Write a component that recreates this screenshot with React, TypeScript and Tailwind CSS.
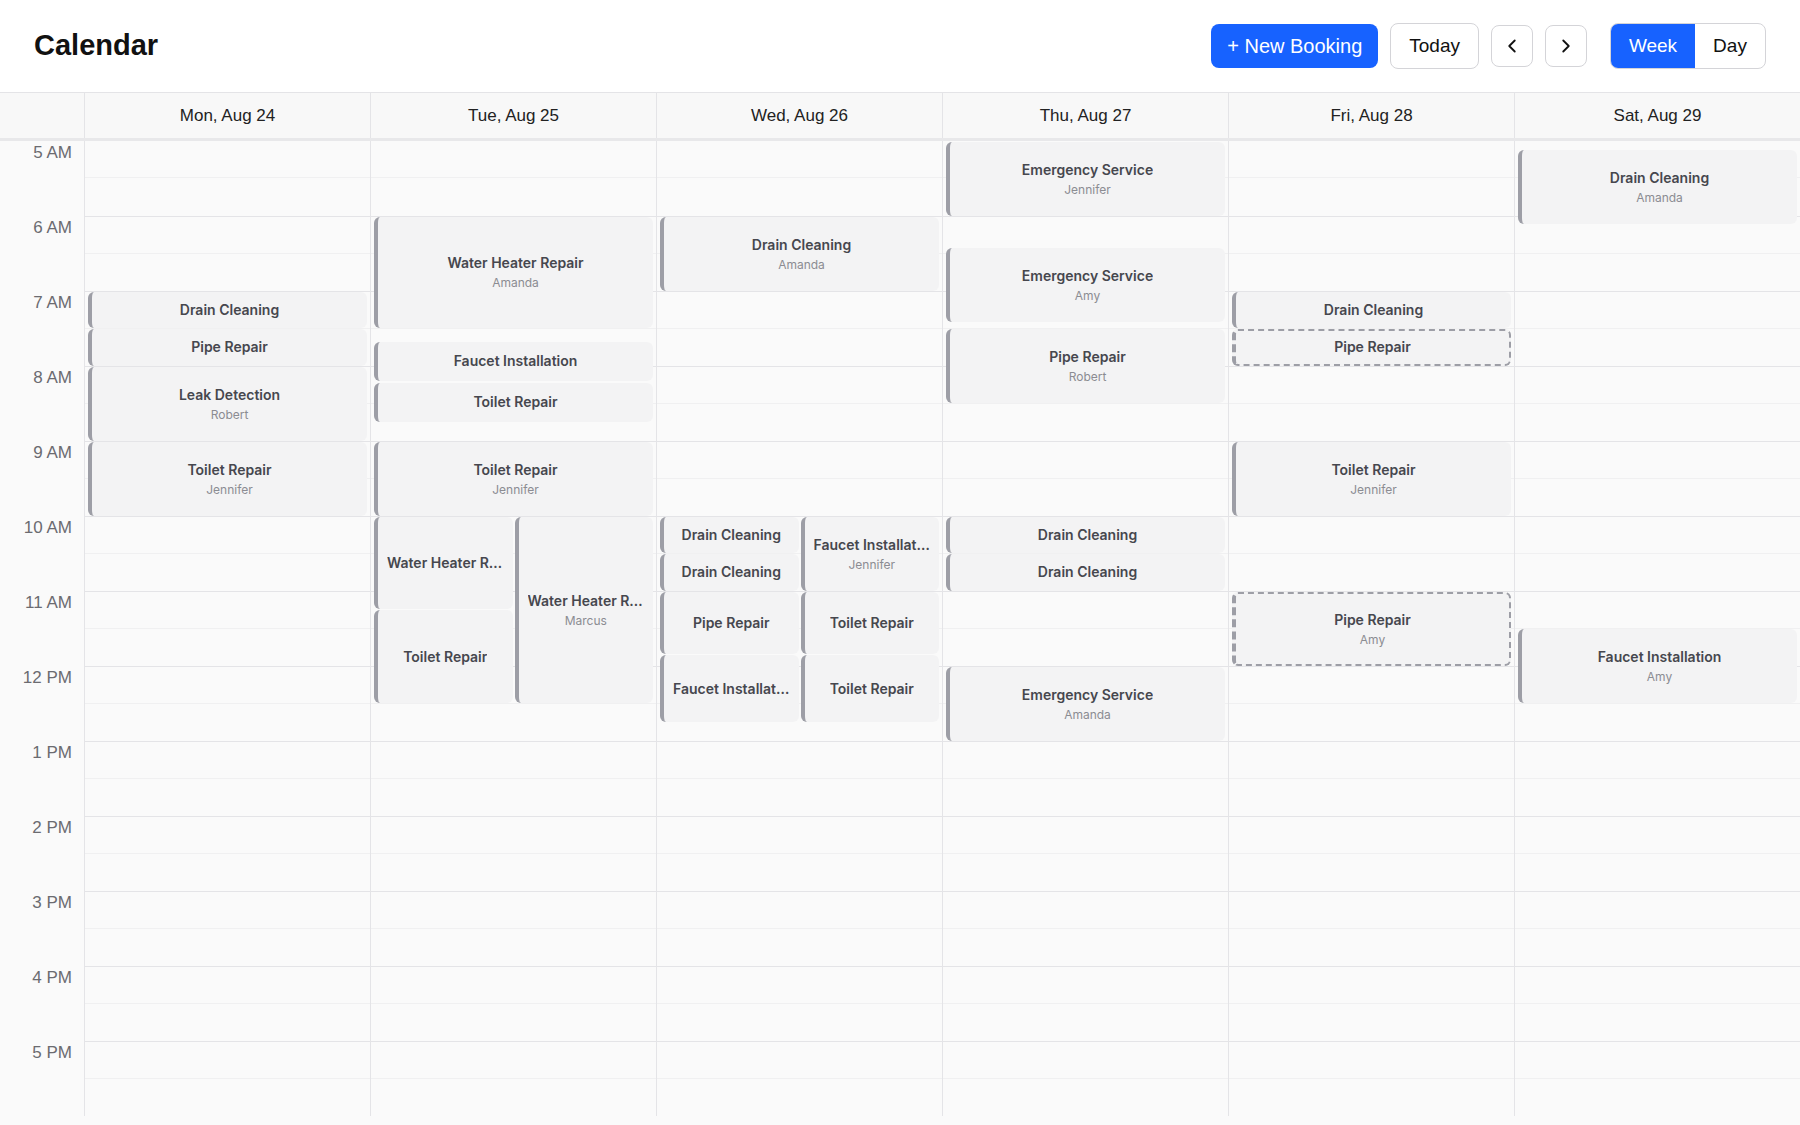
import React from 'react';
import { ChevronLeft, ChevronRight } from 'lucide-react';

const HOUR = 75;
const START = 5;

type Booking = {
  title: string;
  tech?: string;
  start: string;
  end: string;
  col?: number;
  cols?: number;
  dashed?: boolean;
};

const days: { label: string; bookings: Booking[] }[] = [
  {
    label: 'Mon, Aug 24',
    bookings: [
      { title: 'Drain Cleaning', start: '7:00', end: '7:30' },
      { title: 'Pipe Repair', start: '7:30', end: '8:00' },
      { title: 'Leak Detection', tech: 'Robert', start: '8:00', end: '9:00' },
      { title: 'Toilet Repair', tech: 'Jennifer', start: '9:00', end: '10:00' },
    ],
  },
  {
    label: 'Tue, Aug 25',
    bookings: [
      { title: 'Water Heater Repair', tech: 'Amanda', start: '6:00', end: '7:30' },
      { title: 'Faucet Installation', start: '7:40', end: '8:12' },
      { title: 'Toilet Repair', start: '8:13', end: '8:45' },
      { title: 'Toilet Repair', tech: 'Jennifer', start: '9:00', end: '10:00' },
      { title: 'Water Heater Repair', start: '10:00', end: '11:15', col: 0, cols: 2 },
      { title: 'Toilet Repair', start: '11:15', end: '12:30', col: 0, cols: 2 },
      { title: 'Water Heater Repair', tech: 'Marcus', start: '10:00', end: '12:30', col: 1, cols: 2 },
    ],
  },
  {
    label: 'Wed, Aug 26',
    bookings: [
      { title: 'Drain Cleaning', tech: 'Amanda', start: '6:00', end: '7:00' },
      { title: 'Drain Cleaning', start: '10:00', end: '10:30', col: 0, cols: 2 },
      { title: 'Drain Cleaning', start: '10:30', end: '11:00', col: 0, cols: 2 },
      { title: 'Pipe Repair', start: '11:00', end: '11:51', col: 0, cols: 2 },
      { title: 'Faucet Installation', start: '11:51', end: '12:45', col: 0, cols: 2 },
      { title: 'Faucet Installation', tech: 'Jennifer', start: '10:00', end: '11:00', col: 1, cols: 2 },
      { title: 'Toilet Repair', start: '11:00', end: '11:51', col: 1, cols: 2 },
      { title: 'Toilet Repair', start: '11:51', end: '12:45', col: 1, cols: 2 },
    ],
  },
  {
    label: 'Thu, Aug 27',
    bookings: [
      { title: 'Emergency Service', tech: 'Jennifer', start: '5:00', end: '6:00' },
      { title: 'Emergency Service', tech: 'Amy', start: '6:25', end: '7:25' },
      { title: 'Pipe Repair', tech: 'Robert', start: '7:30', end: '8:30' },
      { title: 'Drain Cleaning', start: '10:00', end: '10:30' },
      { title: 'Drain Cleaning', start: '10:30', end: '11:00' },
      { title: 'Emergency Service', tech: 'Amanda', start: '12:00', end: '13:00' },
    ],
  },
  {
    label: 'Fri, Aug 28',
    bookings: [
      { title: 'Drain Cleaning', start: '7:00', end: '7:30' },
      { title: 'Pipe Repair', start: '7:30', end: '8:00', dashed: true },
      { title: 'Toilet Repair', tech: 'Jennifer', start: '9:00', end: '10:00' },
      { title: 'Pipe Repair', tech: 'Amy', start: '11:00', end: '12:00', dashed: true },
    ],
  },
  {
    label: 'Sat, Aug 29',
    bookings: [
      { title: 'Drain Cleaning', tech: 'Amanda', start: '5:07', end: '6:07' },
      { title: 'Faucet Installation', tech: 'Amy', start: '11:30', end: '12:30' },
    ],
  },
];

const hours = ['5 AM', '6 AM', '7 AM', '8 AM', '9 AM', '10 AM', '11 AM', '12 PM', '1 PM', '2 PM', '3 PM', '4 PM', '5 PM'];

function toPx(t: string) {
  const [h, m] = t.split(':').map(Number);
  return ((h - START) * 60 + m) * (HOUR / 60);
}

function BookingCard({ b }: { b: Booking }) {
  const top = toPx(b.start);
  const height = toPx(b.end) - top;
  const col = b.col ?? 0;
  const cols = b.cols ?? 1;
  return (
    <div
      className={`absolute flex flex-col items-center justify-center overflow-hidden rounded-md bg-[#f3f3f4] px-[9px] text-center ${
        b.dashed ? 'border-2 border-l-4 border-dashed border-[#9d9ea6]' : 'border-l-4 border-[#9d9ea6]'
      }`}
      style={{
        top: top + 0.5,
        height: height - 1,
        left: `calc(3px + (100% - 4px) * ${col} / ${cols})`,
        width: `calc((100% - 4px) / ${cols} - 2px)`,
      }}
    >
      <div className="max-w-full truncate text-[14px] font-semibold leading-5 text-[#46474e]">{b.title}</div>
      {b.tech && <div className="mt-[2px] text-[12px] leading-4 text-[#8b8c92]">{b.tech}</div>}
    </div>
  );
}

export default function App() {
  return (
    <div className="flex h-[1125px] w-[1800px] flex-col overflow-hidden bg-[#fafafa] font-['Liberation_Sans',Arial,sans-serif]">
      {/* Top bar */}
      <div className="flex h-[93px] shrink-0 items-center justify-between border-b border-[#e4e4e7] bg-white px-[34px]">
        <h1 className="text-[29px] font-bold text-[#111]">Calendar</h1>
        <div className="flex items-center">
          <button className="h-[44px] rounded-lg bg-[#1762ff] px-4 text-[20px] text-white">+ New Booking</button>
          <button className="ml-3 h-[46px] rounded-lg border border-[#d4d4d8] bg-white px-[18px] text-[19px] text-[#111]">Today</button>
          <button className="ml-3 flex h-[42px] w-[42px] items-center justify-center rounded-lg border border-[#d4d4d8] bg-white text-[#111]">
            <ChevronLeft size={22} strokeWidth={2} />
          </button>
          <button className="ml-3 flex h-[42px] w-[42px] items-center justify-center rounded-lg border border-[#d4d4d8] bg-white text-[#111]">
            <ChevronRight size={22} strokeWidth={2} />
          </button>
          <div className="ml-[23px] flex h-[46px] overflow-hidden rounded-lg border border-[#d4d4d8] bg-white text-[19px]">
            <button className="w-[84px] bg-[#1762ff] text-white">Week</button>
            <button className="w-[70px] text-[#111]">Day</button>
          </div>
        </div>
      </div>

      {/* Day headers */}
      <div className="flex h-[48px] shrink-0 border-b-[3px] border-[#e8e8ea] bg-[#f8f8f8]">
        <div className="w-[85px] shrink-0 border-r border-[#e4e4e7]" />
        {days.map((d, i) => (
          <div
            key={d.label}
            className={`flex flex-1 items-center justify-center text-[17px] text-[#222] ${i < days.length - 1 ? 'border-r border-[#e4e4e7]' : ''}`}
          >
            {d.label}
          </div>
        ))}
      </div>

      {/* Grid */}
      <div className="flex shrink-0">
        <div className="w-[85px] shrink-0 border-r border-[#e4e4e7]">
          {hours.map((h) => (
            <div key={h} className="h-[75px] pr-3 text-right text-[17px] leading-6 text-[#6b6b70]">
              {h}
            </div>
          ))}
        </div>
        {days.map((d, i) => (
          <div key={d.label} className={`relative flex-1 ${i < days.length - 1 ? 'border-r border-[#e4e4e7]' : ''}`}>
            {hours.map((h, j) => (
              <div key={h} className={`h-[75px] ${j > 0 ? 'border-t border-[#e4e4e7]' : ''}`}>
                <div className="h-[37px] border-b border-[#f0f0f1]" />
              </div>
            ))}
            <div className="absolute inset-0 font-['Inter',sans-serif]">
              {d.bookings.map((b, k) => (
                <BookingCard key={k} b={b} />
              ))}
            </div>
          </div>
        ))}
      </div>
    </div>
  );
}
